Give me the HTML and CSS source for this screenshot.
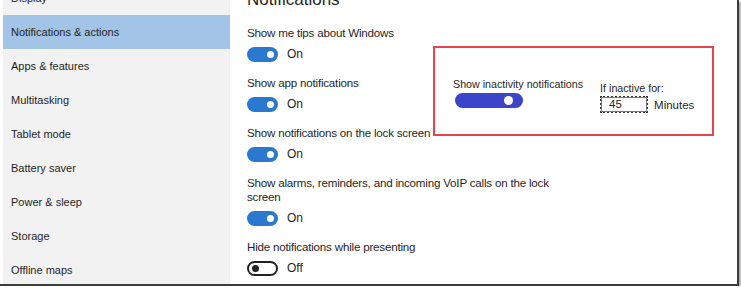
FILE: index.html
```html
<!DOCTYPE html>
<html lang="en">
  <head>
    <meta charset="UTF-8" />
    <title>Notifications &amp; actions</title>
    <link rel="stylesheet" href="styles.css">
  </head>
  <body>
    <div class="frame">
      <nav class="sidebar">
        <div class="nav-item">Display</div>
        <div class="nav-item active">Notifications &amp; actions</div>
        <div class="nav-item">Apps &amp; features</div>
        <div class="nav-item">Multitasking</div>
        <div class="nav-item">Tablet mode</div>
        <div class="nav-item">Battery saver</div>
        <div class="nav-item">Power &amp; sleep</div>
        <div class="nav-item">Storage</div>
        <div class="nav-item">Offline maps</div>
      </nav>

      <main class="content">
        <h1>Notifications</h1>

        <div class="setting">
          <div class="label">Show me tips about Windows</div>
          <div class="toggle-row"><span class="toggle on"></span>On</div>
        </div>

        <div class="setting">
          <div class="label">Show app notifications</div>
          <div class="toggle-row"><span class="toggle on"></span>On</div>
        </div>

        <div class="setting">
          <div class="label">Show notifications on the lock screen</div>
          <div class="toggle-row"><span class="toggle on"></span>On</div>
        </div>

        <div class="setting">
          <div class="label">Show alarms, reminders, and incoming VoIP calls on the lock screen</div>
          <div class="toggle-row"><span class="toggle on"></span>On</div>
        </div>

        <div class="setting">
          <div class="label">Hide notifications while presenting</div>
          <div class="toggle-row"><span class="toggle off"></span>Off</div>
        </div>

        <!-- hand drawn mockup pasted over the page -->
        <div class="mockup">
          <div class="mock-col">
            <div class="mock-label">Show inactivity notifications</div>
            <span class="mock-toggle"></span>
          </div>
          <div class="mock-col">
            <div class="mock-label">If inactive for:</div>
            <div class="mock-input-row">
              <span class="mock-input">45</span>
              <span>Minutes</span>
            </div>
          </div>
        </div>
      </main>
    </div>
  </body>
</html>
```

FILE: styles.css
```css
body {
  margin: 0;
  background: #fff;
  font-family: "Liberation Sans", Arial, sans-serif;
  color: #1f1f1f;
  overflow: hidden;
}

.frame {
  display: flex;
  width: 734px;
  height: 284px;
  padding-left: 3px;
  background: #fff;
  border-right: 2px solid #3c3c3c;
  border-bottom: 2px solid #3c3c3c;
  box-shadow: 2px 2px 2px rgba(0, 0, 0, 0.35);
  overflow: hidden;
}

.sidebar {
  width: 227px;
  flex-shrink: 0;
  background: #f2f2f2;
  margin-top: -19px;
}

.nav-item {
  height: 34px;
  line-height: 34px;
  padding-left: 8px;
  font-size: 11px;
}

.nav-item.active {
  background: #a2c4e6;
}

.content {
  position: relative;
  flex: 1;
  padding-left: 17px;
}

h1 {
  font-size: 17px;
  font-weight: normal;
  margin: -10px 0 0;
  height: 20px;
  line-height: 20px;
}

.setting:first-of-type {
  margin-top: 16px;
}

.label {
  font-size: 11.6px;
  line-height: 14px;
  letter-spacing: -0.2px;
  width: 332px;
}

.toggle-row {
  display: flex;
  align-items: center;
  gap: 9px;
  height: 16px;
  margin-top: 6px;
  margin-bottom: 14px;
  font-size: 12px;
}

.toggle {
  position: relative;
  width: 31px;
  height: 15px;
  box-sizing: border-box;
  border-radius: 8px;
}

.toggle.on {
  background: #2a78d0;
}

.toggle.off {
  border: 2px solid #222;
}

.toggle::after {
  content: "";
  position: absolute;
  top: 50%;
  width: 7px;
  height: 7px;
  margin-top: -3.5px;
  border-radius: 50%;
}

.toggle.on::after {
  right: 4px;
  background: #fff;
}

.toggle.off::after {
  left: 3px;
  background: #222;
}

.mockup {
  position: absolute;
  left: 203px;
  top: 46px;
  width: 281px;
  height: 90px;
  border: 2px solid #e8444f;
  display: flex;
  gap: 17px;
  padding: 30px 0 0 18px;
  box-sizing: border-box;
  font-family: "Liberation Sans", sans-serif;
  font-size: 10.7px;
}

.mock-col {
  display: flex;
  flex-direction: column;
}

.mock-col:last-child {
  padding-top: 4px;
}

.mock-label {
  line-height: 13px;
}

.mock-toggle {
  position: relative;
  width: 68px;
  height: 15px;
  margin: 2px 0 0 2px;
  border-radius: 8px;
  background: #3c45c9;
}

.mock-toggle::after {
  content: "";
  position: absolute;
  right: 10px;
  top: 3px;
  width: 9px;
  height: 9px;
  border-radius: 50%;
  background: #fff;
}

.mock-input-row {
  display: flex;
  align-items: center;
  gap: 6px;
  margin-top: 1px;
  font-size: 11.5px;
}

.mock-input {
  width: 37px;
  height: 13px;
  padding-left: 7px;
  line-height: 13px;
  border: 2px dotted #333;
  outline: 1px solid #777;
  outline-offset: -2px;
}
```
